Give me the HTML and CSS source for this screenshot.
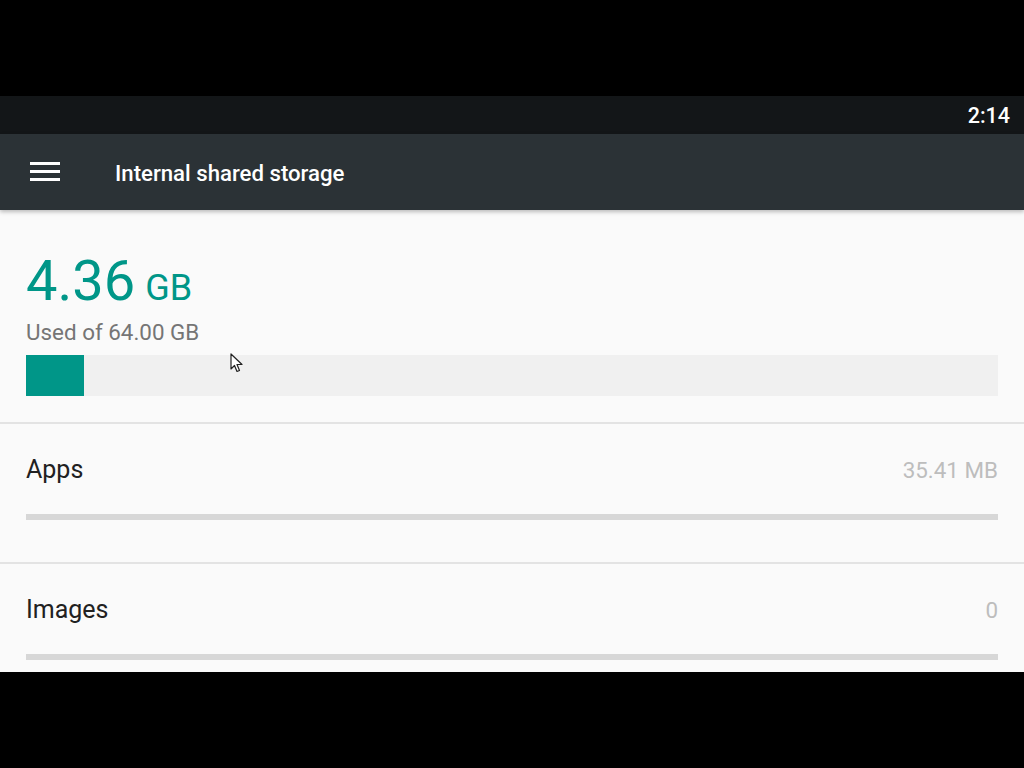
FILE: index.html
```html
<!DOCTYPE html>
<html lang="en">
<head>
    <meta charset="UTF-8">
    <meta name="viewport" content="width=device-width, initial-scale=1.0">
    <title>Internal shared storage</title>
    <link rel="stylesheet" href="styles.css">
</head>
<body>

    <!-- device screen -->
    <div class="screen">
        <div class="status-bar">
            <span class="clock">2:14</span>
        </div>

        <div class="toolbar">
            <div class="menu-icon">
                <span></span><span></span><span></span>
            </div>
            <h1 class="title">Internal shared storage</h1>
        </div>

        <div class="content">
            <!-- summary -->
            <div class="summary">
                <div class="used"><span class="used-num">4.36</span><span class="used-unit">GB</span></div>
                <div class="used-of">Used of 64.00 GB</div>
                <div class="meter">
                    <div class="meter-fill" style="width: 6%;"></div>
                </div>
                <svg class="cursor" width="14" height="22" viewBox="0 0 14 22">
                    <path d="M1 1 L1 16 L4.5 12.5 L7 18.5 L9.5 17.5 L7 11.5 L12 11.5 Z" fill="#fff" stroke="#222" stroke-width="1.2" stroke-linejoin="round"/>
                </svg>
            </div>

            <!-- categories -->
            <div class="category">
                <div class="category-row">
                    <span class="category-name">Apps</span>
                    <span class="category-size">35.41 MB</span>
                </div>
                <div class="category-bar"></div>
            </div>

            <div class="category">
                <div class="category-row">
                    <span class="category-name">Images</span>
                    <span class="category-size">0</span>
                </div>
                <div class="category-bar"></div>
            </div>
        </div>
    </div>

</body>
</html>
```

FILE: styles.css
```css
body {
    margin: 0;
    padding: 0;
    background-color: #000;
    font-family: Roboto, "Liberation Sans", sans-serif;
    height: 768px;
    overflow: hidden;
}

/* screen area between the black bands */
.screen {
    margin-top: 96px;
    height: 576px;
    overflow: hidden;
    background-color: #fafafa;
}

.status-bar {
    height: 38px;
    background-color: #131618;
    display: flex;
    align-items: center;
    justify-content: flex-end;
    padding-right: 14px;
}

.clock {
    color: #fff;
    font-size: 21.5px;
    font-weight: 500;
    margin-top: 1px;
}

.toolbar {
    height: 76px;
    background-color: #2b3236;
    display: flex;
    align-items: center;
    position: relative;
    box-shadow: 0 2px 4px rgba(0, 0, 0, 0.25);
}

.menu-icon {
    width: 30px;
    margin-left: 30px;
    display: flex;
    flex-direction: column;
    gap: 5px;
    margin-top: -2px;
}

.menu-icon span {
    display: block;
    height: 3px;
    background-color: #fff;
}

.title {
    margin: 2px 0 0 55px;
    color: #fff;
    font-size: 22.2px;
    font-weight: 500;
}

/* content */
.content {
    padding: 0 26px;
}

.summary {
    position: relative;
    padding-top: 38px;
    padding-bottom: 26px;
    border-bottom: 2px solid #e3e3e3;
    margin: 0 -26px;
    padding-left: 26px;
    padding-right: 26px;
}

.used {
    color: #009688;
    line-height: 66px;
    height: 66px;
}

.used-num {
    font-size: 56px;
}

.used-unit {
    font-size: 36px;
    margin-left: 10px;
}

.used-of {
    color: #757575;
    font-size: 22.4px;
    line-height: 26px;
    margin-top: 5px;
}

.meter {
    margin-top: 10px;
    height: 41px;
    background-color: #f0f0f0;
}

.meter-fill {
    height: 100%;
    background-color: #009688;
}

.cursor {
    position: absolute;
    left: 230px;
    top: 143px;
}

.category {
    margin: 0 -26px;
    padding: 0 26px;
    border-bottom: 2px solid #e3e3e3;
    height: 138px;
}

.category-row {
    display: flex;
    justify-content: space-between;
    align-items: baseline;
    padding-top: 31px;
    height: 59px;
}

.category-name {
    color: #212121;
    font-size: 25px;
}

.category-size {
    color: #bdbdbd;
    font-size: 22.4px;
}

.category-bar {
    height: 6px;
    background-color: #d7d7d7;
}
```
